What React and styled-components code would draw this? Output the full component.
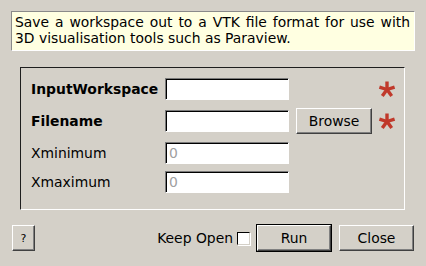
import React from "react";
import styled, { createGlobalStyle } from "styled-components";

const GlobalStyle = createGlobalStyle`
  html, body {
    margin: 0;
    padding: 0;
    background: #d4d0c8;
  }
  body {
    font-family: "DejaVu Sans", "Liberation Sans", sans-serif;
    font-size: 13.9px;
    color: #000;
  }
`;

const fields = [
  { name: "InputWorkspace", required: true, bold: true },
  { name: "Filename", required: true, bold: true, browse: true },
  { name: "Xminimum", placeholder: "0" },
  { name: "Xmaximum", placeholder: "0", tight: true },
];

function Asterisk() {
  const arms = [-90, -18, 54, 126, 198];
  return (
    <svg width="18" height="18" viewBox="0 0 18 18">
      {arms.map((a) => {
        const r = (a * Math.PI) / 180;
        return (
          <line
            key={a}
            x1="9"
            y1="9.5"
            x2={9 + Math.cos(r) * 8}
            y2={9.5 + Math.sin(r) * 8}
            stroke="#c0392b"
            strokeWidth="3.4"
          />
        );
      })}
    </svg>
  );
}

export default function App() {
  return (
    <Dialog>
      <GlobalStyle />
      <Description>
        Save a workspace out to a VTK file format for use with 3D visualisation
        tools such as Paraview.
      </Description>
      <Frame>
        {fields.map((f) => (
          <Row key={f.name} $tight={f.tight}>
            <Label $bold={f.bold}>{f.name}</Label>
            <Input placeholder={f.placeholder} />
            <div>{f.browse && <Button $browse>Browse</Button>}</div>
            <Mark>{f.required && <Asterisk />}</Mark>
          </Row>
        ))}
      </Frame>
      <Footer>
        <Button $small>?</Button>
        <Spacer />
        <KeepOpen>
          Keep Open
          <Check />
        </KeepOpen>
        <DefaultButton>
          <Button $inner>Run</Button>
        </DefaultButton>
        <Button>Close</Button>
      </Footer>
    </Dialog>
  );
}

const Dialog = styled.div`
  width: 426px;
  height: 266px;
  box-sizing: border-box;
  padding-top: 11px;
  display: flex;
  flex-direction: column;
`;

const Description = styled.div`
  margin-left: 11px;
  width: 404px;
  box-sizing: border-box;
  background: #ffffe1;
  border-top: 1px solid #8a8a8a;
  border-left: 1px solid #8a8a8a;
  border-right: 1px solid #fff;
  border-bottom: 1px solid #fff;
  padding: 3px 4px 4px 3px;
  line-height: 15.5px;
  text-align: justify;
`;

const Frame = styled.div`
  margin: 16px 0 0 20px;
  width: 385px;
  height: 143px;
  box-sizing: border-box;
  border-top: 1px solid #1e1e1e;
  border-left: 1px solid #1e1e1e;
  border-right: 1px solid #fff;
  border-bottom: 1px solid #fff;
  padding: 10px 0 0 10px;
  display: flex;
  flex-direction: column;
  gap: 8px;
`;

const Row = styled.div`
  display: grid;
  grid-template-columns: 134px 124px 83px 1fr;
  align-items: center;
  margin-top: ${(p) => (p.$tight ? "-1px" : "0")};
`;

const Label = styled.span`
  font-weight: ${(p) => (p.$bold ? "bold" : "normal")};
  white-space: nowrap;
`;

const Input = styled.input`
  width: 124px;
  height: 22px;
  box-sizing: border-box;
  margin: 0;
  background: #fff;
  font: inherit;
  padding: 0 3px;
  border-style: solid;
  border-width: 1px;
  border-color: #7a7a7a #fff #fff #7a7a7a;
  box-shadow: inset 1px 1px 0 #000;
  outline: none;
  &::placeholder {
    color: #a0a0a0;
  }
`;

const Mark = styled.div`
  display: flex;
  padding-left: 6px;
`;

const Button = styled.button`
  font: inherit;
  color: #000;
  background: #d4d0c8;
  margin: 0;
  margin-left: ${(p) => (p.$browse ? "7px" : p.$small ? "12px" : "0")};
  padding: 0;
  height: 26px;
  width: ${(p) => (p.$small ? "23px" : p.$inner ? "74px" : p.$browse ? "76px" : "75px")};
  box-sizing: border-box;
  border-style: solid;
  border-width: 1px;
  border-color: #fff #404040 #404040 #fff;
  box-shadow: inset -1px -1px 0 #808080;
  font-size: ${(p) => (p.$small ? "11px" : "inherit")};
`;

const DefaultButton = styled.div`
  border: 1px solid #000;
  display: flex;
  margin-right: 7px;
`;

const Footer = styled.div`
  margin-top: 14px;
  padding-right: 12px;
  display: flex;
  align-items: center;
`;

const Spacer = styled.div`
  flex: 1;
`;

const KeepOpen = styled.label`
  display: flex;
  align-items: center;
  gap: 4px;
  margin-right: 6px;
`;

const Check = styled.span`
  width: 13px;
  height: 13px;
  box-sizing: border-box;
  background: #fff;
  border-style: solid;
  border-width: 1px;
  border-color: #000 #d4d0c8 #d4d0c8 #000;
  box-shadow: 1px 1px 0 #fff;
`;
